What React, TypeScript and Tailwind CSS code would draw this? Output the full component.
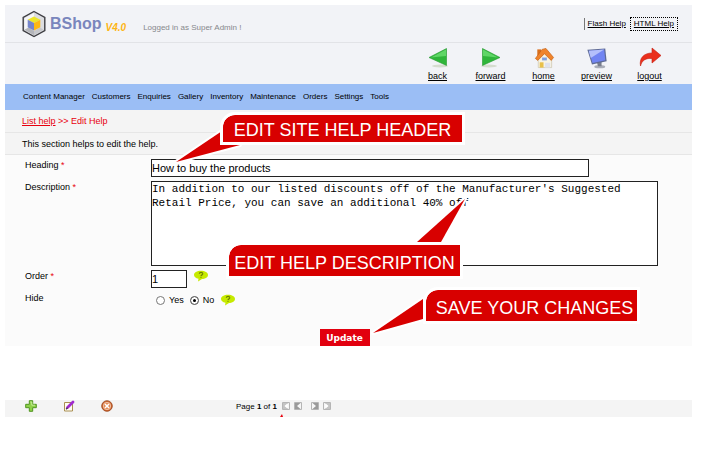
import type { ReactNode } from "react";

function Logo() {
  return (
    <svg viewBox="0 0 24 28" className="h-7 w-6" aria-hidden="true">
      <path d="M12 1.5 22.8 7.5V20.5L12 26.5 1.2 20.5V7.5Z" fill="#dcdde1" stroke="#3d3d42" strokeWidth="1.4" />
      <path d="M2.5 8.2 12 3V8L6.5 11V18L2.5 19.8Z" fill="#f6f6f8" />
      <path d="M12 25.3 2.5 19.8 6.5 17.6 12 21Z" fill="#b4b5ba" />
      <path d="M12 25.3 21.5 19.8 18 17.6 12 21Z" fill="#c6c7cb" />
      <path d="M12 6.5 18.3 9.8 12 13 5.7 9.8Z" fill="#ece52a" />
      <path d="M5.7 9.8 12 13V20.5L5.7 17.3Z" fill="#7585cc" />
      <path d="M18.3 9.8 12 13V20.5L18.3 17.3Z" fill="#fdb813" />
    </svg>
  );
}

function BackIcon() {
  return (
    <svg viewBox="0 0 22 22" className="size-[22px]" aria-hidden="true">
      <ellipse cx="13" cy="19" rx="8" ry="1.5" fill="#d5dccf" />
      <path d="M2 10.5 19.5 1.5V18.5Z" fill="#2fb53a" stroke="#23992d" strokeWidth=".6" />
      <path d="M4 10.4 19 2.6V9Z" fill="#5fd666" />
    </svg>
  );
}

function ForwardIcon() {
  return (
    <svg viewBox="0 0 22 22" className="size-[22px]" aria-hidden="true">
      <ellipse cx="9" cy="19" rx="8" ry="1.5" fill="#d5dccf" />
      <path d="M20 10.5 2.5 1.5V18.5Z" fill="#2fb53a" stroke="#23992d" strokeWidth=".6" />
      <path d="M18 10.4 3 2.6V9Z" fill="#5fd666" />
    </svg>
  );
}

function HomeIcon() {
  return (
    <svg viewBox="0 0 22 23" className="size-[22px]" aria-hidden="true">
      <path d="M5 12 12 6 19 12V21.5H5Z" fill="#f7f3e4" stroke="#c9c2ab" strokeWidth=".7" />
      <path d="M4 2.5H8V9H4Z" fill="#d96f1c" />
      <path d="M2 12 9 2.5 13 1.5 21 11 18.5 14 11.5 7 4.5 14Z" fill="#f0842c" stroke="#c45f12" strokeWidth=".7" />
      <path d="M9 11H14V14H9Z" fill="#7f9fe0" />
      <path d="M6.5 16H10.5V21.5H6.5Z" fill="#e8c04a" />
      <path d="M12 16.5H17.5V21.5H12Z" fill="#dfe2ee" />
    </svg>
  );
}

function PreviewIcon() {
  return (
    <svg viewBox="0 0 24 24" className="h-[22px] w-6" aria-hidden="true">
      <ellipse cx="15" cy="21.5" rx="6" ry="1.8" fill="#a9adb8" />
      <path d="M12 17 17 16V21H13Z" fill="#777c8c" />
      <path d="M1.5 3 21 1.5 22.5 15.5 6.5 19Z" fill="#5e6a94" />
      <path d="M3 4.2 19.8 2.7 21 14.5 7.2 17.5Z" fill="#7184f2" />
      <path d="M3 4.2 19.8 2.7 5.2 12Z" fill="#b4c0fb" />
    </svg>
  );
}

function LogoutIcon() {
  return (
    <svg viewBox="0 0 24 22" className="h-[22px] w-6" aria-hidden="true">
      <path d="M2.5 19C1 11 6 6 14 6V1L23 8.5 14 16V11.5C8 11 4 13 2.5 19Z" fill="#ea2f1c" stroke="#c41e10" strokeWidth=".6" />
    </svg>
  );
}

function HelpBubble() {
  return (
    <svg viewBox="0 0 15 12" className="h-3 w-4" role="img" aria-label="Help">
      <path d="M7.5 .8C11.5 .8 14.5 2.6 14.5 5 14.5 7.4 11.5 9 8.5 9L4.5 11.6 5 8.8C2.2 8.2 .5 6.8 .5 5 .5 2.6 3.5 .8 7.5 .8Z" fill="#c6ea00" />
      <path d="M5.8 3.8C6 2 9.3 2 9.2 3.9 9.1 5 7.5 5 7.5 6.2M7.5 7.2V8" fill="none" stroke="#6c8200" strokeWidth="1.2" />
    </svg>
  );
}

function AddIcon() {
  return (
    <svg viewBox="0 0 12 12" className="size-3" aria-hidden="true">
      <path d="M4.3 .7H7.7V4.3H11.3V7.7H7.7V11.3H4.3V7.7H.7V4.3H4.3Z" fill="#8fd14a" stroke="#4f9420" />
      <path d="M5.2 2H6.8V5.2H10" fill="none" stroke="#d3f2ab" strokeWidth=".8" />
    </svg>
  );
}

function EditIcon() {
  return (
    <svg viewBox="0 0 12 12" className="size-3" aria-hidden="true">
      <path d="M1.5 2.5H9.5V11H1.5Z" fill="#fffdf2" stroke="#a98f52" />
      <path d="M4.5 7.5 10 2" stroke="#a02bd0" strokeWidth="2.8" strokeLinecap="round" />
      <path d="M3 9.2 4.6 7.8" stroke="#4a3450" strokeWidth="1.2" />
    </svg>
  );
}

function DeleteIcon() {
  return (
    <svg viewBox="0 0 12 12" className="size-3" aria-hidden="true">
      <circle cx="6" cy="6" r="5.3" fill="#d0672f" stroke="#95431a" strokeWidth=".8" />
      <circle cx="6" cy="6" r="3.7" fill="#e38b56" stroke="#f6d9c6" strokeWidth=".7" />
      <path d="M4 4 8 8M8 4 4 8" stroke="#fff" strokeWidth="1.5" />
    </svg>
  );
}

function PagerIcon({ flip, end }: { flip?: boolean; end?: boolean }) {
  return (
    <svg viewBox="0 0 8 8" className={flip ? "size-2 -scale-x-100" : "size-2"} aria-hidden="true">
      <path d="M.5 .5H7.5V7.5H.5Z" fill="#f6f6f6" stroke="#b5b5b5" />
      <path d="M1 1H6.5L3 4 6.5 7H1Z" fill={end ? "#c4c4c4" : "#9a9a9a"} />
      {end && <path d="M2.5 4 5.5 1.5V6.5Z" fill="#fff" />}
    </svg>
  );
}

const tools: { label: string; icon: ReactNode }[] = [
  { label: "back", icon: <BackIcon /> },
  { label: "forward", icon: <ForwardIcon /> },
  { label: "home", icon: <HomeIcon /> },
  { label: "preview", icon: <PreviewIcon /> },
  { label: "logout", icon: <LogoutIcon /> },
];

const menu = ["Content Manager", "Customers", "Enquiries", "Gallery", "Inventory", "Maintenance", "Orders", "Settings", "Tools"];

const required = <span className="text-[#e8000d]">*</span>;

const radio = "size-[9px] appearance-none rounded-full border border-[#777] bg-white checked:bg-black checked:shadow-[inset_0_0_0_2px_#fff]";

export default function App() {
  return (
    <div className="relative bg-white py-[5px] pr-[10px] pl-[5px] font-['Liberation_Sans',Arial,sans-serif] text-[9px] leading-3 text-black">
      <header className="bg-[#f2f3f7]">
        <div className="flex h-[38px] items-center border-b border-[#e2e3e7] pr-3.5 pl-[17px]">
          <Logo />
          <span className="ml-1 text-base leading-6 font-bold text-[#7a86bd]">BShop</span>
          <span className="mt-2 ml-1 text-[10px] font-bold text-[#fdb515] italic">V4.0</span>
          <span className="mt-2 ml-[17px] text-[8px] text-[#87888c]">Logged in as Super Admin !</span>
          <div className="ml-auto flex items-center gap-1 text-[8px]">
            <a href="#flash" className="border-l border-[#777] pl-[3px] underline">Flash Help</a>
            <a href="#html" className="border border-dotted border-black px-[3px] underline">HTML Help</a>
          </div>
        </div>
        <nav aria-label="Tools" className="flex h-[41px] justify-end pr-4">
          {tools.map((t) => (
            <a key={t.label} href={"#" + t.label} className="flex w-[53px] flex-col items-center justify-between pt-1 pb-0.5 underline">
              {t.icon}
              {t.label}
            </a>
          ))}
        </nav>
      </header>

      <nav aria-label="Main" className="flex h-[26px] items-center gap-[7px] bg-[#9bbef5] pl-[18px] text-[8px]">
        {menu.map((m) => (
          <a key={m} href={"#" + m.toLowerCase().replace(" ", "-")}>{m}</a>
        ))}
      </nav>

      <div className="flex h-[23px] items-center border-b border-[#e6e6e6] bg-[#f4f4f4] pl-[17px] text-[#e8000d]">
        <p><a href="#list" className="underline">List help</a> &gt;&gt; Edit Help</p>
      </div>
      <p className="flex h-[22px] items-center border-b border-[#e6e6e6] bg-[#f4f4f4] pl-[17px]">This section helps to edit the help.</p>

      <form className="bg-[#fbfbfb] pt-1 pr-[34px] pl-5">
        <div className="grid grid-cols-[126px_1fr] gap-y-1">
          <label htmlFor="heading">Heading {required}</label>
          <input id="heading" defaultValue="How to buy the products" className="h-[18px] w-[438px] border border-[#222] bg-white text-[11px]" />
          <label htmlFor="description">Description {required}</label>
          <textarea
            id="description"
            defaultValue="In addition to our listed discounts off of the Manufacturer's Suggested Retail Price, you can save an additional 40% off"
            className="block h-[85px] w-full resize-none overflow-hidden border border-[#222] bg-white font-['Liberation_Mono','Courier_New',monospace] text-[11px] leading-[14px]"
          />
          <label htmlFor="order">Order {required}</label>
          <div className="flex gap-1.5">
            <input id="order" defaultValue="1" className="h-[18px] w-9 border border-[#222] bg-white text-[11px]" />
            <HelpBubble />
          </div>
          <span id="hide-label">Hide</span>
          <div role="radiogroup" aria-labelledby="hide-label" className="flex h-4 items-center gap-1.5 pl-[5px]">
            <label className="flex items-center gap-1">
              <input type="radio" name="hide" className={radio} />
              Yes
            </label>
            <label className="flex items-center gap-1">
              <input type="radio" name="hide" defaultChecked className={radio} />
              No
            </label>
            <HelpBubble />
          </div>
        </div>
        <div className="flex h-[38px] items-end justify-center pl-1.5">
          <button type="button" className="h-[17px] w-[50px] bg-[#e2000f] font-['DejaVu_Sans',Verdana,sans-serif] font-bold text-white">Update</button>
        </div>
      </form>

      <footer className="mt-[54px] flex h-[17px] items-start bg-[#f4f4f4] pl-5">
        <div className="flex w-[211px] gap-[26px]">
          <button type="button" aria-label="Add"><AddIcon /></button>
          <button type="button" aria-label="Edit"><EditIcon /></button>
          <button type="button" aria-label="Delete"><DeleteIcon /></button>
        </div>
        <p className="pt-px text-[8px]">Page <b>1</b> of <b>1</b></p>
        <div className="flex gap-1 pt-0.5 pl-[5px]">
          <button type="button" aria-label="First page"><PagerIcon end /></button>
          <button type="button" aria-label="Previous page"><PagerIcon /></button>
          <button type="button" aria-label="Next page" className="ml-[5px]"><PagerIcon flip /></button>
          <button type="button" aria-label="Last page"><PagerIcon flip end /></button>
        </div>
      </footer>

      <svg viewBox="0 0 702 470" className="pointer-events-none absolute top-0 left-0 h-[470px] w-[702px]" aria-hidden="true">
        <g fill="#d80000" stroke="#fff" strokeWidth="4" strokeLinejoin="round" paintOrder="stroke">
          <path d="M176 162 222 131 240 145Z" />
          <path d="M465 199 417 242H441Z" />
          <path d="M373 333 423 299V319Z" />
        </g>
        <path d="M280 417 282 414 283 417Z" fill="#e8000d" />
      </svg>
      <div className="absolute top-[115px] left-[223px] flex h-[27px] w-[239px] items-center justify-center rounded-tl-xl bg-[#d80000] pt-0.5 text-[18px] whitespace-nowrap text-white outline-[3px] outline-white">EDIT SITE HELP HEADER</div>
      <div className="absolute top-[245px] left-[229px] flex h-[31px] w-[231px] items-center justify-center rounded-tl-xl bg-[#d80000] pt-1 text-[18px] whitespace-nowrap text-white outline-[3px] outline-white">EDIT HELP DESCRIPTION</div>
      <div className="absolute top-[290px] left-[426px] flex h-[31px] w-[211px] items-center justify-center rounded-tl-xl bg-[#d80000] pt-1 pl-1.5 text-[18px] whitespace-nowrap text-white outline-[3px] outline-white">SAVE YOUR CHANGES</div>
    </div>
  );
}
